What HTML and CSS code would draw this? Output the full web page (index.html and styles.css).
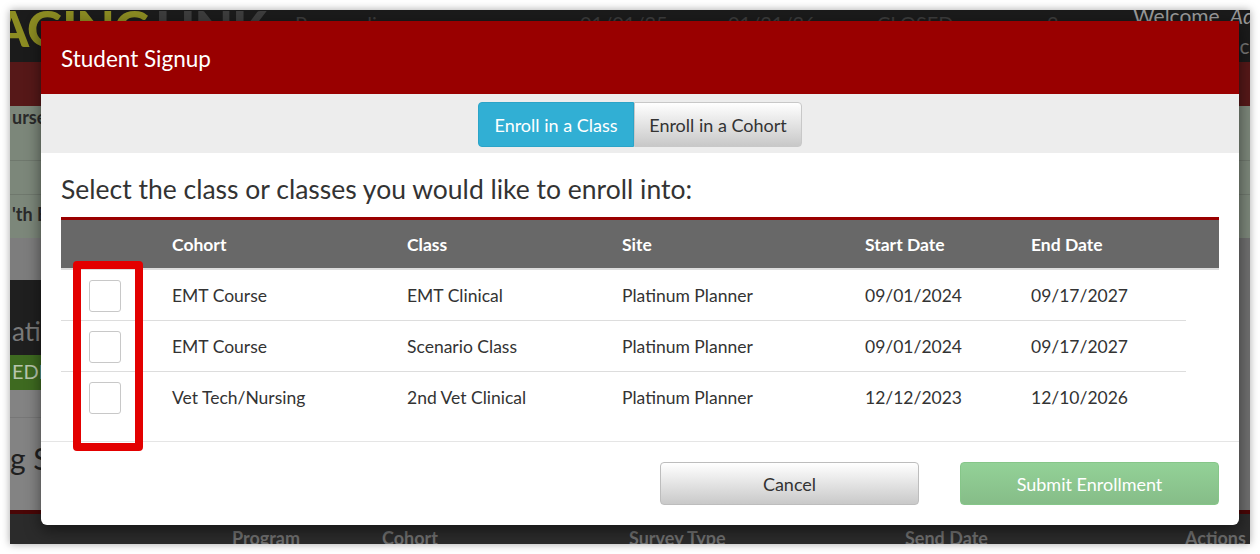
FILE: index.html
```html
<!DOCTYPE html>
<html lang="en">
<head>
    <meta charset="UTF-8">
    <meta name="viewport" content="width=device-width, initial-scale=1.0">
    <title>Student Signup</title>
    <link rel="stylesheet" href="styles.css">
</head>
<body>
    <div class="screen">
        <!-- page behind the modal (dimmed) -->
        <div class="app">
            <div class="app-top">
                <div class="logo">AGING<span class="logo-rest">LINK</span></div>
                <div class="top-cell c1">Paramedic</div>
                <div class="top-cell c2">01/01/25</div>
                <div class="top-cell c3">01/31/26</div>
                <div class="top-cell c4">CLOSED</div>
                <div class="top-cell c5">3</div>
                <div class="welcome">Welcome, <i>Admin</i><br><span class="welcome-sub">ac</span></div>
            </div>
            <div class="band-red"></div>
            <div class="band-green">
                <div class="band-row bold">urse</div>
                <div class="band-row"></div>
                <div class="band-row bold">'th E</div>
            </div>
            <div class="band-mid">
                <div class="band-grey"></div>
                <div class="band-dark">atio</div>
                <div class="band-edit">EDIT</div>
                <div class="band-line"></div>
                <div class="survey-title">g Su</div>
            </div>
            <div class="band-footer">
                <span class="f1">Program</span>
                <span class="f2">Cohort</span>
                <span class="f3">Survey Type</span>
                <span class="f4">Send Date</span>
                <span class="f5">Actions</span>
            </div>
        </div>

        <div class="modal">
            <div class="modal-header">Student Signup</div>
            <div class="modal-tabs">
                <div class="btn-group">
                    <button class="tab active">Enroll in a Class</button>
                    <button class="tab">Enroll in a Cohort</button>
                </div>
            </div>
            <div class="modal-body">
                <h2 class="prompt">Select the class or classes you would like to enroll into:</h2>
                <div class="classes">
                    <div class="row head">
                        <div></div>
                        <div>Cohort</div>
                        <div>Class</div>
                        <div>Site</div>
                        <div>Start Date</div>
                        <div>End Date</div>
                    </div>
                    <div class="row">
                        <div><span class="check"></span></div>
                        <div>EMT Course</div>
                        <div>EMT Clinical</div>
                        <div>Platinum Planner</div>
                        <div>09/01/2024</div>
                        <div>09/17/2027</div>
                    </div>
                    <div class="row">
                        <div><span class="check"></span></div>
                        <div>EMT Course</div>
                        <div>Scenario Class</div>
                        <div>Platinum Planner</div>
                        <div>09/01/2024</div>
                        <div>09/17/2027</div>
                    </div>
                    <div class="row last">
                        <div><span class="check"></span></div>
                        <div>Vet Tech/Nursing</div>
                        <div>2nd Vet Clinical</div>
                        <div>Platinum Planner</div>
                        <div>12/12/2023</div>
                        <div>12/10/2026</div>
                    </div>
                </div>
            </div>
            <div class="modal-footer">
                <button class="btn cancel">Cancel</button>
                <button class="btn submit">Submit Enrollment</button>
            </div>
        </div>

        <div class="highlight"></div>
    </div>
</body>
</html>
```

FILE: styles.css
```css
body {
    margin: 0;
    padding: 10px;
    background: #fff;
    font-family: Lato, "Liberation Sans", sans-serif;
}
.screen {
    position: relative;
    width: 1240px;
    height: 534px;
    overflow: hidden;
    background: #2a2a2a;
    box-shadow: 0 0 8px rgba(0, 0, 0, 0.35);
}

/* background page */
.app-top {
    display: flex;
    height: 52px;
    background: #1b1b1b;
    color: #3c3c3c;
    font-size: 20px;
    overflow: hidden;
}
.app-top > div {
    flex-shrink: 0;
}
.logo {
    width: 301px;
    margin-left: -16px;
    margin-top: -12px;
    font-size: 50px;
    font-weight: 900;
    color: #8c8c22;
    letter-spacing: -1px;
    white-space: nowrap;
}
.logo-rest {
    color: #3d3d3d;
    margin-left: 6px;
}
.top-cell {
    padding-top: 1px;
}
.c1 { width: 285px; }
.c2 { width: 148px; }
.c3 { width: 149px; }
.c4 { width: 170px; }
.c5 { width: 86px; }
.welcome {
    margin-top: -9px;
    color: #9a9a9a;
    font-size: 21px;
    line-height: 30px;
    white-space: nowrap;
}
.welcome-sub {
    margin-left: 96px;
    color: #777;
}
.band-red {
    height: 44px;
    background: #561818;
}
.band-green {
    height: 132px;
    background: #7c877a;
}
.band-row {
    height: 33px;
    border-bottom: 1px solid #6f786d;
    font-size: 18px;
    line-height: 22px;
    color: #2a2a2a;
}
.band-row.bold {
    font-weight: 700;
    height: 54px;
    padding-left: 2px;
}
.band-row.bold:last-child {
    line-height: 38px;
}
.band-mid {
    height: 272px;
    background: #6f6f6f;
    border-bottom: 4px solid #4a0606;
}
.band-grey {
    width: 400px;
    height: 42px;
    background: #7d7d7d;
}
.band-dark {
    width: 400px;
    height: 75px;
    background: #1f1f1f;
    color: #7a7a7a;
    font-size: 26px;
    line-height: 102px;
    padding-left: 2px;
}
.band-edit {
    width: 400px;
    height: 35px;
    background: #3e6a20;
    color: #b8c6ad;
    font-size: 20px;
    line-height: 33px;
    padding-left: 2px;
}
.band-line {
    width: 400px;
    height: 27px;
    background: #838383;
    border-bottom: 1px solid #777;
}
.survey-title {
    width: 400px;
    height: 92px;
    background: #838383;
    font-size: 30px;
    line-height: 80px;
    color: #1f1f1f;
}
.band-footer {
    position: relative;
    height: 30px;
    background: #2b2b2b;
    color: #6e6e6e;
    font-size: 18px;
    font-weight: 700;
}
.band-footer span {
    position: absolute;
    top: 13px;
}
.f1 { left: 222px; }
.f2 { left: 372px; }
.f3 { left: 619px; }
.f4 { left: 895px; }
.f5 { left: 1175px; }

/* modal */
.modal {
    position: absolute;
    left: 31px;
    top: 11px;
    width: 1198px;
    height: 504px;
    background: #fff;
    border-radius: 0 0 6px 6px;
    box-shadow: 0 5px 15px rgba(0, 0, 0, 0.5);
    display: flex;
    flex-direction: column;
    overflow: hidden;
}
.modal-header {
    height: 73px;
    background: #990000;
    color: #fff;
    font-size: 22.5px;
    line-height: 76px;
    padding-left: 20px;
}
.modal-tabs {
    height: 59px;
    background: #ededed;
    display: flex;
    justify-content: center;
    padding-top: 8px;
    box-sizing: border-box;
}
.btn-group {
    display: flex;
    height: 45px;
}
button {
    font-family: inherit;
    cursor: pointer;
}
.tab {
    font-size: 18px;
    white-space: nowrap;
    border: 1px solid #c8c8c8;
    background: linear-gradient(#fff, #c8c8c8);
    color: #333;
    padding: 0;
    border-radius: 0 4px 4px 0;
    width: 168px;
}
.tab.active {
    width: 156px;
    background: #31afd4;
    border-color: #2ba4c8;
    color: #fff;
    border-radius: 4px 0 0 4px;
}
.modal-body {
    padding: 20px 20px 19px;
    border-bottom: 1px solid #e5e5e5;
}
.prompt {
    margin: 0;
    font-size: 26.5px;
    font-weight: 400;
    line-height: 32px;
    color: #333;
}
.classes {
    margin-top: 12px;
    border-top: 3px solid #990000;
    font-size: 17.5px;
    color: #333;
}
.row {
    display: grid;
    grid-template-columns: 103px 235px 215px 243px 166px 163px;
    width: 1125px;
    height: 50px;
    align-items: center;
    border-bottom: 1px solid #ddd;
}
.row > div {
    padding-left: 8px;
}
.row.head {
    width: auto;
    height: 48px;
    background: #686868;
    color: #fff;
    font-weight: 700;
    border-bottom: 2px solid #ddd;
}
.row.last {
    border-bottom: none;
}
.row > div:first-child {
    padding-left: 28px;
}
.check {
    display: block;
    width: 30px;
    height: 30px;
    border: 1px solid #c8c8c8;
    border-radius: 3px;
    margin-top: 2px;
}
.modal-footer {
    flex: 1;
    display: flex;
    justify-content: flex-end;
    gap: 41px;
    padding: 20px 20px 0;
}
.btn {
    width: 259px;
    height: 43px;
    font-size: 18px;
    border-radius: 4px;
}
.cancel {
    border: 1px solid #bdbdbd;
    background: linear-gradient(#fff, #c9c9c9);
    color: #333;
}
.submit {
    border: 1px solid #86c689;
    background: linear-gradient(#93d197, #86bd88);
    color: #fff;
}

/* red annotation box */
.highlight {
    position: absolute;
    left: 63px;
    top: 251px;
    width: 54px;
    height: 174px;
    border: 8px solid #e30000;
    border-radius: 4px;
}
```
